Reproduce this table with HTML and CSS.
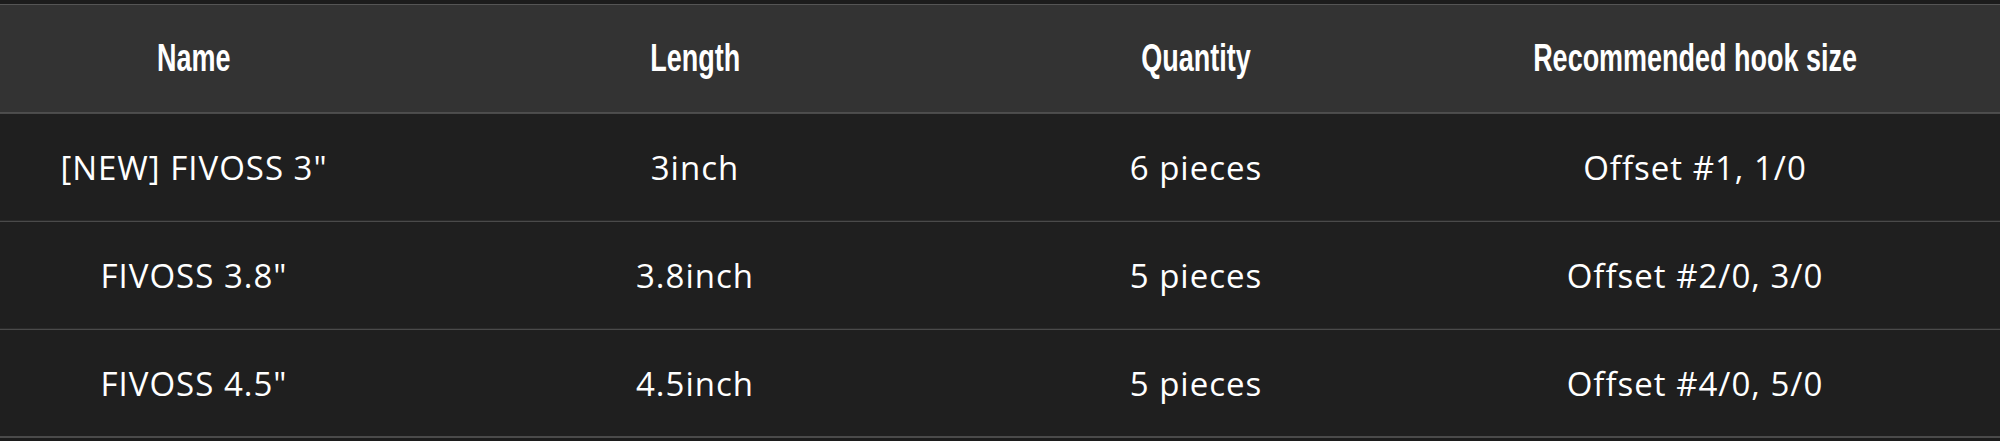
FILE: index.html
```html
<!DOCTYPE html>
<html lang="en">
<head>
    <meta charset="UTF-8">
    <title>FIVOSS Sizes</title>
    <link rel="stylesheet" href="styles.css">
</head>
<body>
    <div class="size-table">
        <div class="row head">
            <div class="cell"><span>Name</span></div>
            <div class="cell"><span>Length</span></div>
            <div class="cell"><span>Quantity</span></div>
            <div class="cell"><span>Recommended hook size</span></div>
        </div>
        <div class="row">
            <div class="cell">[NEW] FIVOSS 3"</div>
            <div class="cell">3inch</div>
            <div class="cell">6 pieces</div>
            <div class="cell">Offset #1, 1/0</div>
        </div>
        <div class="row">
            <div class="cell">FIVOSS 3.8"</div>
            <div class="cell">3.8inch</div>
            <div class="cell">5 pieces</div>
            <div class="cell">Offset #2/0, 3/0</div>
        </div>
        <div class="row">
            <div class="cell">FIVOSS 4.5"</div>
            <div class="cell">4.5inch</div>
            <div class="cell">5 pieces</div>
            <div class="cell">Offset #4/0, 5/0</div>
        </div>
    </div>
</body>
</html>
```

FILE: styles.css
```css
body {
    margin: 0;
    padding: 0;
    background-color: #1c1c1c;
    color: #fff;
    font-family: "Open Sans", "Liberation Sans", sans-serif;
}

.size-table {
    padding-top: 4px;
}

.row {
    display: grid;
    grid-template-columns: 388px 614px 388px 1fr;
    height: 106px;
    background-color: #1f1f1f;
    border-top: 1px solid #4a4a4a;
    border-bottom: 1px solid #2a2a2a;
}

.row:last-child {
    border-bottom: 2px solid #4a4a4a;
}

.row.head {
    height: 107px;
    background-color: #333;
    border-top: 1px solid #555;
    border-bottom: 1px solid #4e4e4e;
}

.cell {
    display: flex;
    align-items: center;
    justify-content: center;
    font-size: 33px;
    letter-spacing: 1px;
}

.head .cell span {
    display: inline-block;
    font-family: "Liberation Sans Narrow", "Liberation Sans", sans-serif;
    font-weight: bold;
    font-size: 38px;
    letter-spacing: 0;
    transform: scaleX(0.71);
}
```
